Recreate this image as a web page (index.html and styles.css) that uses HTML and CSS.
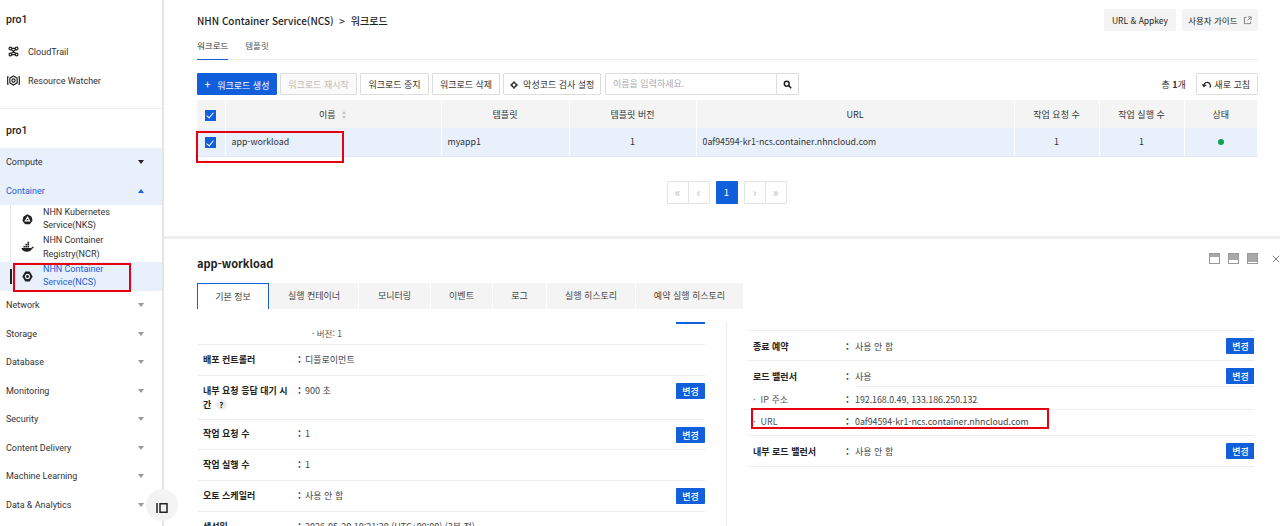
FILE: index.html
```html
<!DOCTYPE html>
<html lang="ko">
<head>
    <meta charset="UTF-8">
    <meta name="viewport" content="width=device-width, initial-scale=1.0">
    <title>NHN Container Service(NCS)</title>
    <link rel="stylesheet" href="styles.css">
</head>
<body>
    <aside class="sidebar">
        <div class="side-title">pro1</div>
        <a class="side-link">
            <svg class="side-icon" viewBox="-1.500 -1.500 19 19" fill="none" stroke="#222" stroke-width="1.800"><circle cx="3.500" cy="3.500" r="2"/><circle cx="12.500" cy="3.500" r="2"/><circle cx="3.500" cy="12.500" r="2"/><circle cx="12.500" cy="12.500" r="2"/><path d="M5.500 3.500h5M5.500 12.500h5M4.800 5.200l6.400 5.600M11.200 5.200l-6.400 5.600"/></svg>
            CloudTrail
        </a>
        <a class="side-link">
            <svg class="side-icon" viewBox="0 0 16 16" fill="none" stroke="#222" stroke-width="1.400"><path d="M8 2.500l4.500 2.600v5.800L8 13.500l-4.500-2.600V5.100z"/><circle cx="8" cy="8" r="2"/><path d="M2 3.500H.8v9H2M14 3.500h1.200v9H14"/></svg>
            Resource Watcher
        </a>
        <div class="side-title second">pro1</div>
        <div class="cat open">Compute <span class="caret down dark"></span></div>
        <div class="cat open active">Container <span class="caret up blue"></span></div>
        <ul class="sub-list">
            <li class="sub-item">
                <svg class="sub-icon" viewBox="-1.500 -1.500 19 19"><path d="M8 .5l5.800 3 1.600 6.300-4 5.200H4.600l-4-5.200 1.600-6.300z" fill="#222"/><path d="M8 4.500l3.200 5.500H4.800z" fill="none" stroke="#fff" stroke-width="1.600"/></svg>
                <span>NHN Kubernetes Service(NKS)</span>
            </li>
            <li class="sub-item">
                <svg class="sub-icon" viewBox="0 0 16 16" fill="#222"><path d="M.5 8.500h11.800c.8 0 1.300-.5 1.500-1.400l2 .4c-.4 1.300-1.300 1.900-2.300 2-1 2.500-3.200 3.700-6 3.700-3.800 0-6.600-1.700-7-4.700z"/><path d="M3 6h2v2H3zM5.500 6h2v2h-2zM8 6h2v2H8zM5.500 3.500h2v2h-2zM8 3.500h2v2H8zM8 1h2v2H8z"/></svg>
                <span>NHN Container Registry(NCR)</span>
            </li>
            <li class="sub-item current">
                <svg class="sub-icon" viewBox="-1.500 -1.500 19 19"><path d="M4.800 .8h6.400L15.600 8l-4.400 7.200H4.800L.4 8z" fill="#222"/><path d="M6.400 5h3.200L11.200 8l-1.600 3H6.400L4.800 8z" fill="none" stroke="#fff" stroke-width="1.600"/></svg>
                <span>NHN Container Service(NCS)</span>
            </li>
        </ul>
        <div class="cat">Network <span class="caret down"></span></div>
        <div class="cat">Storage <span class="caret down"></span></div>
        <div class="cat">Database <span class="caret down"></span></div>
        <div class="cat">Monitoring <span class="caret down"></span></div>
        <div class="cat">Security <span class="caret down"></span></div>
        <div class="cat">Content Delivery <span class="caret down"></span></div>
        <div class="cat">Machine Learning <span class="caret down"></span></div>
        <div class="cat">Data &amp; Analytics <span class="caret down"></span></div>
    </aside>

    <button class="collapse">
        <svg viewBox="0 0 12 12" fill="none" stroke="#222" stroke-width="1.500"><path d="M1 1v10M4 1.800h7v8.400H4z"/></svg>
    </button>

    <main class="main">
        <section class="upper">
            <div class="top-row">
                <div class="crumbs">NHN Container Service(NCS) <span class="crumb-sep">&gt;</span> 워크로드</div>
                <div class="top-buttons">
                    <button class="ghost key">URL &amp; Appkey</button>
                    <button class="ghost guide">사용자 가이드
                        <svg class="ext" viewBox="0 0 10 10" fill="none" stroke="#777"><path d="M4 1.500H1.500v7h7V6M5.500 1h3.500v3.500M9 1L5 5"/></svg>
                    </button>
                </div>
            </div>
            <nav class="page-tabs">
                <a class="page-tab on">워크로드</a>
                <a class="page-tab">템플릿</a>
            </nav>
            <div class="toolbar">
                <button class="btn primary"><span class="plus">+</span> 워크로드 생성</button>
                <button class="btn disabled w-restart">워크로드 재시작</button>
                <button class="btn w-stop">워크로드 중지</button>
                <button class="btn w-delete">워크로드 삭제</button>
                <button class="btn w-scan">
                    <svg class="gear" viewBox="0 0 12 12"><circle cx="6" cy="6" r="3.200" fill="none" stroke="#222" stroke-width="2"/><path d="M5 .5h2v2H5zM5 9.500h2v2H5zM.5 5h2v2h-2zM9.500 5h2v2h-2z" fill="#222"/></svg>
                    악성코드 검사 설정
                </button>
                <div class="search">
                    <span class="search-text">이름을 입력하세요.</span>
                    <span class="search-btn">
                        <svg viewBox="0 0 12 12" fill="none" stroke="#222" stroke-width="2"><circle cx="5" cy="5" r="3.200"/><path d="M7.500 7.500L11 11"/></svg>
                    </span>
                </div>
                <div class="total">총 <b>1</b>개</div>
                <button class="btn refresh">
                    <svg class="refresh-icon" viewBox="0 0 12 12" fill="none" stroke="#222" stroke-width="1.500"><path d="M2.500 8.500A4 4 0 1 1 9.500 9"/><path d="M.5 5l2 2.500L5 6"/></svg>
                    새로 고침
                </button>
            </div>
            <table class="grid">
                <colgroup>
                    <col class="c-check"><col class="c-name"><col class="c-tpl"><col class="c-ver"><col class="c-url"><col class="c-num"><col class="c-num"><col class="c-state">
                </colgroup>
                <thead>
                    <tr>
                        <th><span class="check"></span></th>
                        <th>이름 <span class="sort"></span></th>
                        <th>템플릿</th>
                        <th>템플릿 버전</th>
                        <th>URL</th>
                        <th>작업 요청 수</th>
                        <th>작업 실행 수</th>
                        <th>상태</th>
                    </tr>
                </thead>
                <tbody>
                    <tr>
                        <td class="mid"><span class="check"></span></td>
                        <td>app-workload</td>
                        <td>myapp1</td>
                        <td class="mid">1</td>
                        <td>0af94594-kr1-ncs.container.nhncloud.com</td>
                        <td class="mid">1</td>
                        <td class="mid">1</td>
                        <td class="mid"><span class="dot"></span></td>
                    </tr>
                </tbody>
            </table>
            <div class="pager">
                <div class="page-group"><span>«</span><span>‹</span></div>
                <span class="page-on">1</span>
                <div class="page-group"><span>›</span><span>»</span></div>
            </div>
        </section>

        <section class="lower">
            <h2 class="detail-title">app-workload</h2>
            <div class="panel-tools">
                <span class="size-icon top"></span>
                <span class="size-icon half"></span>
                <span class="size-icon full"></span>
                <svg class="close" viewBox="0 0 10 10" fill="none" stroke="#777" stroke-width="1.200"><path d="M1 1l8 8M9 1l-8 8"/></svg>
            </div>
            <div class="detail-tabs">
                <a class="detail-tab on">기본 정보</a>
                <a class="detail-tab">실행 컨테이너</a>
                <a class="detail-tab">모니터링</a>
                <a class="detail-tab">이벤트</a>
                <a class="detail-tab">로그</a>
                <a class="detail-tab">실행 히스토리</a>
                <a class="detail-tab">예약 실행 히스토리</a>
            </div>
            <div class="detail-body">
                <div class="pane left">
                    <div class="stub"></div>
                    <div class="row clipped"><span class="version">· 버전: 1</span></div>
                    <div class="row"><span class="label">배포 컨트롤러</span><span class="colon">:</span><span class="value">디플로이먼트</span></div>
                    <div class="row tall"><span class="label">내부 요청 응답 대기 시간 <i class="help">?</i></span><span class="colon">:</span><span class="value">900 초</span><button class="change">변경</button></div>
                    <div class="row"><span class="label">작업 요청 수</span><span class="colon">:</span><span class="value">1</span><button class="change">변경</button></div>
                    <div class="row"><span class="label">작업 실행 수</span><span class="colon">:</span><span class="value">1</span></div>
                    <div class="row"><span class="label">오토 스케일러</span><span class="colon">:</span><span class="value">사용 안 함</span><button class="change">변경</button></div>
                    <div class="row"><span class="label">생성일</span><span class="colon">:</span><span class="value">2026-05-20 10:21:20 (UTC+09:00) (3분 전)</span></div>
                </div>
                <div class="pane right">
                    <div class="row"><span class="label">종료 예약</span><span class="colon">:</span><span class="value">사용 안 함</span><button class="change">변경</button></div>
                    <div class="row lb"><span class="label">로드 밸런서</span><span class="colon">:</span><span class="value">사용</span><button class="change">변경</button></div>
                    <div class="row small"><span class="label plain">·&nbsp; IP 주소</span><span class="colon">:</span><span class="value url">192.168.0.49, 133.186.250.132</span></div>
                    <div class="row small"><span class="label plain">·&nbsp; URL</span><span class="colon">:</span><span class="value url">0af94594-kr1-ncs.container.nhncloud.com</span></div>
                    <div class="row"><span class="label">내부 로드 밸런서</span><span class="colon">:</span><span class="value">사용 안 함</span><button class="change">변경</button></div>
                </div>
            </div>
        </section>
    </main>

    <!-- red annotation boxes drawn over the screenshot -->
    <div class="mark mark-ncs"></div>
    <div class="mark mark-row"></div>
    <div class="mark mark-url"></div>
</body>
</html>
```

FILE: styles.css
```css
* {
    box-sizing: border-box;
}
html, body {
    height: 100%;
}
body {
    margin: 0;
    display: flex;
    height: 526px;
    overflow: hidden;
    font-family: 'Noto Sans CJK KR', 'Noto Sans', sans-serif;
    font-size: 9.5px;
    color: #333;
    background: #fff;
}
button {
    font-family: inherit;
}

/* sidebar */
.sidebar {
    width: 164px;
    flex: none;
    border-right: 2px solid #e4e4e4;
    font-family: Roboto, 'Noto Sans', sans-serif;
}
.side-title {
    height: 37px;
    padding-left: 6px;
    line-height: 40px;
    font-size: 10.5px;
    font-weight: 500;
    color: #222;
}
.side-title.second {
    margin-top: 13px;
    border-top: 1px solid #eee;
    height: 40px;
    line-height: 43px;
}
.side-link {
    display: flex;
    align-items: center;
    gap: 8px;
    height: 29px;
    padding-left: 7px;
    font-size: 9px;
    color: #333;
}
.side-icon {
    width: 13px;
    height: 13px;
}
.cat {
    display: flex;
    align-items: center;
    justify-content: space-between;
    height: 28.5px;
    padding: 0 18px 0 6px;
    font-size: 9px;
    color: #333;
}
.cat.open {
    background: #e8f0fc;
}
.cat.active {
    color: #1a5fd6;
}
.caret {
    width: 0;
    height: 0;
    border-left: 3px solid transparent;
    border-right: 3px solid transparent;
}
.caret.down {
    border-top: 4px solid #999;
}
.caret.down.dark {
    border-top-color: #222;
}
.caret.up.blue {
    border-bottom: 4px solid #1a5fd6;
}
.sub-list {
    list-style: none;
    margin: 0;
    padding: 0;
}
.sub-item {
    display: flex;
    align-items: center;
    height: 28.6px;
    padding-left: 21px;
    gap: 9px;
    line-height: 13.5px;
    font-size: 9px;
    color: #333;
    position: relative;
}
.sub-item::before {
    content: "";
    position: absolute;
    left: 10px;
    top: 0;
    bottom: 0;
    width: 1px;
    background: #e6e6e6;
}
.sub-item.current {
    background: #e8f0fc;
    color: #1a5fd6;
}
.sub-item.current::before {
    width: 2px;
    top: 7px;
    bottom: 7px;
    background: #222;
}
.sub-icon {
    width: 13px;
    height: 13px;
    flex: none;
}
.sub-item span {
    width: 76px;
}
.collapse {
    position: absolute;
    left: 146px;
    top: 489px;
    width: 32px;
    height: 32px;
    border: none;
    border-radius: 50%;
    background: #f3f3f3;
    padding: 10px;
}

/* main */
.main {
    flex: 1;
    min-width: 0;
}
.upper {
    height: 239px;
    padding: 0 22px 0 33px;
    border-bottom: 3px solid #eee;
}
.top-row {
    display: flex;
    justify-content: space-between;
    align-items: center;
    height: 41px;
    padding-bottom: 1px;
}
.crumbs {
    font-size: 10px;
    font-weight: 500;
    color: #222;
}
.crumb-sep {
    margin: 0 3px;
}
.top-buttons {
    display: flex;
    gap: 6px;
}
.ghost {
    height: 22px;
    border: none;
    background: #f4f4f4;
    padding: 0;
    font-size: 8.5px;
    color: #222;
}
.ghost.key { width: 72px; }
.ghost.guide { width: 76px; }
.ext {
    width: 9px;
    height: 9px;
    margin-left: 3px;
    vertical-align: -1px;
}
.page-tabs {
    display: flex;
    gap: 17px;
    height: 19px;
    border-bottom: 1px solid #eee;
}
.page-tab {
    height: 19px;
    line-height: 8px;
    font-size: 8.5px;
    color: #555;
}
.page-tab.on {
    color: #333;
    border-bottom: 1px solid #1a5fd6;
}
.toolbar {
    display: flex;
    align-items: center;
    gap: 3px;
    margin-top: 13px;
    height: 22px;
}
.btn {
    height: 22px;
    padding: 0;
    background: #fff;
    border: 1px solid #ddd;
    border-radius: 1px;
    font-size: 9px;
    color: #333;
    white-space: nowrap;
}
.btn.primary {
    background: #125fdc;
    border-color: #125fdc;
    color: #fff;
    width: 80px;
}
.w-restart { width: 77px; }
.w-stop { width: 69px; }
.w-delete { width: 68px; }
.w-scan { width: 98px; }
.plus {
    font-size: 11px;
    margin-right: 4px;
}
.btn.disabled {
    color: #bbb;
    background: #fafafa;
}
.gear {
    width: 8px;
    height: 8px;
    margin-right: 3px;
    vertical-align: -1px;
}
.search {
    display: flex;
    width: 194px;
    height: 22px;
    margin-left: 1px;
    border: 1px solid #ddd;
    border-radius: 1px;
}
.search-text {
    flex: 1;
    padding-left: 7px;
    line-height: 20px;
    font-size: 9px;
    color: #aaa;
}
.search-btn {
    display: flex;
    align-items: center;
    justify-content: center;
    width: 22px;
    border-left: 1px solid #ddd;
}
.search-btn svg {
    width: 9px;
    height: 9px;
}
.total {
    margin-left: auto;
    margin-right: 7px;
    font-size: 9px;
}
.btn.refresh {
    padding: 0 7px 0 5px;
}
.refresh-icon {
    width: 10px;
    height: 10px;
    vertical-align: -2px;
}

/* workload table */
.grid {
    width: 100%;
    margin-top: 5px;
    border-collapse: collapse;
    table-layout: fixed;
    font-size: 9px;
}
.c-check { width: 28px; }
.c-name { width: 216px; }
.c-tpl { width: 128px; }
.c-ver { width: 127px; }
.c-url { width: 318px; }
.c-num { width: 85px; }
.grid th {
    height: 28px;
    background: #f4f4f4;
    border-right: 1px solid #fff;
    font-weight: 400;
    color: #333;
}
.grid td {
    height: 28px;
    padding: 0 6px;
    background: #e8f0fc;
    border-right: 1px solid #fff;
    border-bottom: 1px solid #e2e8f2;
    color: #333;
    font-size: 8.8px;
}
.grid td.mid {
    text-align: center;
}
.check {
    display: inline-block;
    width: 11px;
    height: 11px;
    background: #125fdc;
    position: relative;
    vertical-align: middle;
}
.check::after {
    content: "";
    position: absolute;
    left: 3px;
    top: 1.5px;
    width: 3px;
    height: 6px;
    border: solid #fff;
    border-width: 0 1.5px 1.5px 0;
    transform: rotate(40deg);
}
.sort {
    display: inline-block;
    position: relative;
    width: 5px;
    height: 8px;
    margin-left: 4px;
    vertical-align: -1px;
}
.sort::before, .sort::after {
    content: "";
    position: absolute;
    left: 0;
    border-left: 2.5px solid transparent;
    border-right: 2.5px solid transparent;
}
.sort::before {
    top: 0;
    border-bottom: 3px solid #c4c4c4;
}
.sort::after {
    bottom: 0;
    border-top: 3px solid #c4c4c4;
}
.dot {
    display: inline-block;
    width: 6px;
    height: 6px;
    border-radius: 50%;
    background: #12a150;
}
.pager {
    display: flex;
    justify-content: center;
    gap: 6px;
    margin-top: 24px;
    padding-right: 2px;
}
.page-group {
    display: flex;
    border: 1px solid #e4e4e4;
    border-radius: 1px;
    height: 23px;
}
.page-group span {
    width: 20px;
    text-align: center;
    line-height: 19px;
    color: #bbb;
    font-size: 12px;
}
.page-group span:first-child {
    width: 21px;
    border-right: 1px solid #e4e4e4;
}
.page-on {
    width: 22px;
    height: 23px;
    background: #125fdc;
    color: #fff;
    text-align: center;
    line-height: 23px;
    border-radius: 1px;
}

/* detail panel */
.lower {
    position: relative;
    padding: 0 26px 0 33px;
    height: 287px;
    overflow: hidden;
}
.detail-title {
    margin: 0;
    padding-top: 15px;
    height: 44px;
    font-size: 11px;
    line-height: 18px;
    font-weight: 700;
    color: #222;
}
.panel-tools {
    position: absolute;
    top: 14px;
    right: 0;
    display: flex;
    align-items: center;
    gap: 8px;
}
.size-icon {
    width: 11px;
    height: 11px;
    background: #a8a8a8;
    border: 1px solid #999;
    position: relative;
}
.size-icon::after {
    content: "";
    position: absolute;
    left: 0;
    right: 0;
    bottom: 0;
    background: #fff;
}
.size-icon.top::after { height: 6px; }
.size-icon.half::after { height: 3px; }
.size-icon.full::after { height: 1px; }
.close {
    width: 8px;
    height: 8px;
    margin-left: 6px;
}
.detail-tabs {
    display: grid;
    grid-template-columns: 72px 88px 71px 61px 53px 88px 107px;
    gap: 1px;
    width: 546px;
    height: 26px;
}
.detail-tab {
    background: #f4f4f4;
    text-align: center;
    line-height: 26px;
    font-size: 9px;
    color: #444;
}
.detail-tab.on {
    background: #fff;
    border: 1px solid #125fdc;
    border-bottom: none;
    border-top-width: 1.5px;
    line-height: 25px;
}
.detail-body {
    display: flex;
    justify-content: space-between;
    margin-top: 13px;
    height: 204px;
    overflow: hidden;
    width: 1057px;
}
.pane {
    width: 508px;
}
.pane.left {
    position: relative;
    width: 530px;
    padding-right: 21px;
    border-right: 1px solid #eee;
}
.pane.right {
    margin-right: -1px;
    padding-top: 8px;
}
.stub {
    position: absolute;
    top: 0;
    right: 21px;
    width: 29px;
    height: 2px;
    background: #125fdc;
}
.row {
    display: flex;
    align-items: flex-start;
    min-height: 31px;
    padding: 8px 0 0 6px;
    border-bottom: 1px solid #eee;
    font-size: 9px;
    line-height: 14px;
    position: relative;
}
.pane.right .row {
    padding-top: 9px;
}
.row.clipped {
    min-height: 23px;
    padding-top: 4px;
}
.version {
    padding-left: 109px;
    color: #555;
    font-size: 8.5px;
}
.row.tall {
    min-height: 44px;
}
.row.tall + .row {
    min-height: 30px;
    padding-top: 7px;
}
.pane.right .row:first-child {
    border-top: 1px solid #eee;
}
.row.lb {
    min-height: 26px;
    border-bottom: none;
}
.row.lb::after {
    content: "";
    position: absolute;
    left: 109px;
    right: 0;
    bottom: 0;
    height: 1px;
    background: #eee;
}
.pane.right .row.small {
    min-height: 23px;
    padding-top: 6px;
}
.pane.right .row.small + .row.small {
    min-height: 26px;
    padding-top: 5px;
}
.label {
    width: 95px;
    padding-right: 5px;
    flex: none;
    font-weight: 700;
    color: #222;
}
.pane.right .label {
    width: 93px;
    padding-right: 0;
}
.label.plain {
    font-weight: 400;
    color: #555;
}
.colon {
    width: 7px;
    flex: none;
    font-weight: 700;
}
.pane.right .colon {
    width: 9px;
}
.value {
    color: #444;
    white-space: nowrap;
}
.value.url {
    font-size: 8.8px;
}
.help {
    display: inline-block;
    width: 11px;
    height: 11px;
    margin-left: 2px;
    border-radius: 50%;
    background: #eee;
    text-align: center;
    line-height: 11px;
    font-style: normal;
    font-size: 8px;
}
.change {
    position: absolute;
    right: 0;
    top: 7px;
    width: 29px;
    height: 16px;
    padding: 0;
    border: none;
    border-radius: 1px;
    background: #125fdc;
    color: #fff;
    font-size: 9px;
    font-weight: 500;
}

/* red annotation boxes */
.mark {
    position: absolute;
    border: 2px solid #e60012;
}
.mark-ncs {
    left: 13px;
    top: 263px;
    width: 118px;
    height: 29px;
}
.mark-row {
    left: 196px;
    top: 131px;
    width: 148px;
    height: 32px;
}
.mark-url {
    left: 751px;
    top: 408px;
    width: 298px;
    height: 21px;
}
```
